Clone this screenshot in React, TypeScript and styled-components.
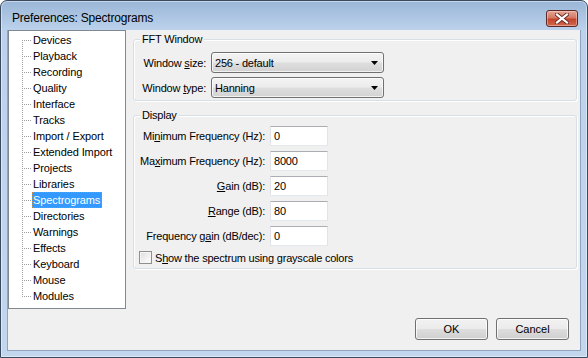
import React from "react";
import styled, { createGlobalStyle } from "styled-components";

const GlobalStyle = createGlobalStyle`
  html, body {
    margin: 0;
    padding: 0;
  }
  body {
    font-family: "Liberation Sans", Arial, sans-serif;
    font-size: 11px;
    color: #000;
  }
  * {
    box-sizing: border-box;
  }
`;

const Window = styled.div`
  width: 588px;
  height: 358px;
  display: flex;
  flex-direction: column;
  border: 1px solid #3a4b5f;
  border-radius: 7px 7px 0 0;
  background: linear-gradient(to bottom, #9ab6d7 0px, #bcd2ec 29px, #c2d6ee 100%);
  box-shadow: inset 0 0 0 1px rgba(255, 255, 255, 0.45);
  overflow: hidden;
`;

const TitleBar = styled.div`
  height: 29px;
  flex: none;
  display: flex;
  align-items: flex-start;
  justify-content: space-between;
  padding: 9px 9px 0 11px;
`;

const Title = styled.div`
  font-size: 12px;
  line-height: 16px;
  letter-spacing: -0.2px;
  color: #000;
`;

const CloseButton = styled.div`
  width: 32px;
  height: 17px;
  border: 1px solid #5a2a28;
  border-radius: 3px;
  background: linear-gradient(to bottom, #e4a595 0%, #d47a66 45%, #c5442c 55%, #cf6a4e 100%);
  box-shadow: inset 0 0 0 1px rgba(255, 220, 210, 0.45);
  display: flex;
  align-items: center;
  justify-content: center;
`;

const Client = styled.div`
  flex: 1;
  margin: 0 6px 6px 6px;
  border: 1px solid #8fa5bf;
  border-top: none;
  background: #f0f0f0;
  display: flex;
  flex-direction: column;
`;

const Body = styled.div`
  height: 279px;
  display: flex;
`;

const Tree = styled.ul`
  width: 118px;
  height: 279px;
  margin: 0;
  padding: 1px 0 0 0;
  list-style: none;
  background: #fff;
  border: 1px solid #828790;
`;

const TreeItem = styled.li<{ $pos: "first" | "mid" | "last" }>`
  position: relative;
  height: 16px;
  padding-left: 23px;
  display: flex;
  align-items: center;

  &::before {
    content: "";
    position: absolute;
    left: 13px;
    width: 1px;
    top: ${(p) => (p.$pos === "first" ? "8px" : "0")};
    height: ${(p) => (p.$pos === "mid" ? "16px" : p.$pos === "first" ? "8px" : "9px")};
    background-image: linear-gradient(to bottom, #a0a0a0 50%, transparent 50%);
    background-size: 1px 2px;
  }

  &::after {
    content: "";
    position: absolute;
    left: 14px;
    top: 8px;
    width: 9px;
    height: 1px;
    background-image: linear-gradient(to right, transparent 50%, #a0a0a0 50%);
    background-size: 2px 1px;
  }
`;

const TreeLabel = styled.span<{ $selected?: boolean }>`
  line-height: 14px;
  padding: 0 1px 0 0;
  letter-spacing: -0.1px;
  border: 1px ${(p) => (p.$selected ? "dotted #c98a3a" : "solid transparent")};
  background: ${(p) => (p.$selected ? "#3399ff" : "transparent")};
  color: ${(p) => (p.$selected ? "#fff" : "#000")};
  white-space: nowrap;
`;

const Panels = styled.div`
  flex: 1;
  margin: 0 3px 0 7px;
  padding-top: 3px;
  display: flex;
  flex-direction: column;
  letter-spacing: -0.2px;
`;

const Group = styled.fieldset<{ $top?: number; $pad: string }>`
  margin: ${(p) => p.$top ?? 0}px 0 0 0;
  padding: ${(p) => p.$pad};
  border: 1px solid #d5dfe5;
  border-radius: 3px;
  box-shadow: inset 1px 1px 0 #fff, 1px 1px 0 #fff;
  min-width: 0;
`;

const Legend = styled.legend`
  padding: 0 2px;
  margin-left: 4px;
  line-height: 13px;
  background: #f0f0f0;
`;

const FormGrid = styled.div<{ $label: number; $gap: number }>`
  display: grid;
  grid-template-columns: ${(p) => p.$label}px auto;
  column-gap: 5px;
  row-gap: ${(p) => p.$gap}px;
  align-items: center;
  justify-items: start;
`;

const Label = styled.label`
  justify-self: end;
  white-space: nowrap;
`;

const Combo = styled.div`
  width: 173px;
  height: 21px;
  border: 1px solid #707070;
  border-radius: 3px;
  background: linear-gradient(to bottom, #f3f3f3 0%, #ececec 48%, #dedede 52%, #d2d2d2 100%);
  box-shadow: inset 0 0 0 1px rgba(255, 255, 255, 0.7);
  display: flex;
  align-items: center;
  justify-content: space-between;
  padding: 0 5px 0 3px;
`;

const TextInput = styled.div`
  width: 58px;
  height: 20px;
  border: 1px solid #dbdfe6;
  border-top-color: #abadb3;
  border-left-color: #e2e3ea;
  border-right-color: #e2e3ea;
  border-bottom-color: #e3e9ef;
  background: #fff;
  padding-left: 3px;
  display: flex;
  align-items: center;
`;

const CheckRow = styled.div`
  grid-column: 1 / span 2;
  margin-left: 3px;
  display: flex;
  align-items: center;
  gap: 3px;
  height: 13px;
`;

const CheckBox = styled.span`
  width: 13px;
  height: 13px;
  border: 1px solid #8e8f8f;
  background: linear-gradient(135deg, #dcdcdc 0%, #f2f2f2 60%, #fdfdfd 100%);
  box-shadow: inset 0 0 0 1px #f4f4f4;
`;

const Footer = styled.div`
  flex: 1;
  display: flex;
  justify-content: flex-end;
  align-items: flex-start;
  gap: 8px;
  padding: 9px 11px 0 0;
`;

const Button = styled.button`
  width: 73px;
  height: 22px;
  font: inherit;
  color: #000;
  border: 1px solid #707070;
  border-radius: 3px;
  background: linear-gradient(to bottom, #f2f2f2 0%, #ebebeb 48%, #dddddd 52%, #cfcfcf 100%);
  box-shadow: inset 0 0 0 1px rgba(255, 255, 255, 0.75);
  padding: 0;
`;

const Key = styled.span`
  text-decoration: underline;
  text-underline-offset: 1px;
`;

const treeItems = [
  "Devices",
  "Playback",
  "Recording",
  "Quality",
  "Interface",
  "Tracks",
  "Import / Export",
  "Extended Import",
  "Projects",
  "Libraries",
  "Spectrograms",
  "Directories",
  "Warnings",
  "Effects",
  "Keyboard",
  "Mouse",
  "Modules",
];

const ArrowDown = () => (
  <svg width="7" height="4" viewBox="0 0 7 4">
    <path d="M0 0H7L3.5 4Z" fill="#000" />
  </svg>
);

const CloseX = () => (
  <svg width="14" height="11" viewBox="0 0 14 11">
    <path
      d="M2 1.5L12 9.5M12 1.5L2 9.5"
      stroke="#6a2a22"
      strokeWidth="4"
      strokeLinecap="square"
    />
    <path d="M2 1.5L12 9.5M12 1.5L2 9.5" stroke="#fff" strokeWidth="2.2" strokeLinecap="square" />
  </svg>
);

const displayRows: { label: React.ReactNode; value: string }[] = [
  { label: <>Mi<Key>n</Key>imum Frequency (Hz):</>, value: "0" },
  { label: <>Ma<Key>x</Key>imum Frequency (Hz):</>, value: "8000" },
  { label: <><Key>G</Key>ain (dB):</>, value: "20" },
  { label: <><Key>R</Key>ange (dB):</>, value: "80" },
  { label: <>Frequency g<Key>a</Key>in (dB/dec):</>, value: "0" },
];

export default function App() {
  return (
    <>
      <GlobalStyle />
      <Window>
        <TitleBar>
          <Title>Preferences: Spectrograms</Title>
          <CloseButton>
            <CloseX />
          </CloseButton>
        </TitleBar>
        <Client>
          <Body>
            <Tree>
              {treeItems.map((name, i) => (
                <TreeItem
                  key={name}
                  $pos={i === 0 ? "first" : i === treeItems.length - 1 ? "last" : "mid"}
                >
                  <TreeLabel $selected={name === "Spectrograms"}>{name}</TreeLabel>
                </TreeItem>
              ))}
            </Tree>
            <Panels>
              <Group $pad="6px 8px 2px 2px">
                <Legend>FFT Window</Legend>
                <FormGrid $label={70} $gap={4}>
                  <Label>
                    Window <Key>s</Key>ize:
                  </Label>
                  <Combo>
                    <span>256 - default</span>
                    <ArrowDown />
                  </Combo>
                  <Label>
                    Window <Key>t</Key>ype:
                  </Label>
                  <Combo>
                    <span>Hanning</span>
                    <ArrowDown />
                  </Combo>
                </FormGrid>
              </Group>
              <Group $top={8} $pad="4px 8px 4px 2px">
                <Legend>Display</Legend>
                <FormGrid $label={129} $gap={5}>
                  {displayRows.map((row, i) => (
                    <React.Fragment key={i}>
                      <Label>{row.label}</Label>
                      <TextInput>{row.value}</TextInput>
                    </React.Fragment>
                  ))}
                  <CheckRow>
                    <CheckBox />
                    <span>
                      S<Key>h</Key>ow the spectrum using grayscale colors
                    </span>
                  </CheckRow>
                </FormGrid>
              </Group>
            </Panels>
          </Body>
          <Footer>
            <Button>OK</Button>
            <Button>Cancel</Button>
          </Footer>
        </Client>
      </Window>
    </>
  );
}
